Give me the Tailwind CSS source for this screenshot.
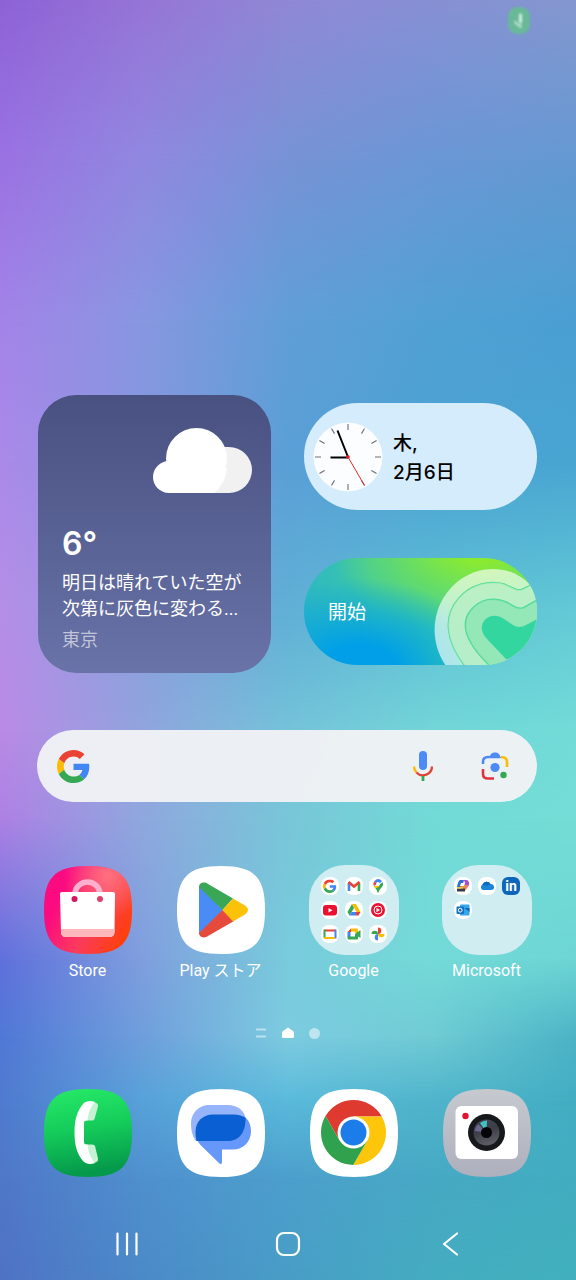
<!DOCTYPE html>
<html lang="ja">
<head>
    <meta charset="UTF-8">
    <meta name="viewport" content="width=device-width, initial-scale=1.0">
    <title>ホーム</title>
    <script src="https://cdn.jsdelivr.net/npm/@tailwindcss/browser@4"></script>
</head>
<body class="relative isolate min-h-screen bg-[#4a9dd2] font-['Roboto','Noto_Sans_CJK_JP',sans-serif] text-white">

    <!-- Wallpaper: horizontal gradients that fade into each other down the page -->
    <div class="absolute inset-0 -z-10 overflow-hidden" aria-hidden="true">
        <div class="absolute inset-0 bg-[linear-gradient(90deg,#8e62d6,#9675d6,#9088d6,#8790d4,#8497cf)]"></div>
        <div class="absolute inset-0 bg-[linear-gradient(90deg,#9a72e2,#9088e0,#7793d6,#6a97d6,#6499d2)] mask-[linear-gradient(transparent_0%,black_12.5%)]"></div>
        <div class="absolute inset-0 bg-[linear-gradient(90deg,#a383e8,#8797e0,#619ed8,#51a1d4,#4a9fd2)] mask-[linear-gradient(transparent_12.5%,black_25%)]"></div>
        <div class="absolute inset-0 bg-[linear-gradient(90deg,#ab89e9,#8498df,#5a9fd6,#4aa2d2,#48a5d2)] mask-[linear-gradient(transparent_25%,black_36%)]"></div>
        <div class="absolute inset-0 bg-[linear-gradient(90deg,#b68ee7,#889fdc,#60b0d6,#60c0d6,#64cad6)] mask-[linear-gradient(transparent_36%,black_48%)]"></div>
        <div class="absolute inset-0 bg-[linear-gradient(90deg,#ba8ae6,#90a4dd,#74c2d9,#72d5d7,#72dcd8)] mask-[linear-gradient(transparent_48%,black_57%)]"></div>
        <div class="absolute inset-0 bg-[linear-gradient(90deg,#ad80e4,#8fa8de,#78c6d8,#72dad6,#74ddd6)] mask-[linear-gradient(transparent_57%,black_64%)]"></div>
        <div class="absolute inset-0 bg-[linear-gradient(90deg,#5f70dc,#7f9fde,#78cbdc,#74dad8,#6cd6d4)] mask-[linear-gradient(transparent_64%,black_75%)]"></div>
        <div class="absolute inset-0 bg-[linear-gradient(90deg,#5078d6,#6f9fdc,#7dcbe0,#6fcbd4,#4bb3c6)] mask-[linear-gradient(transparent_75%,black_81%)]"></div>
        <div class="absolute inset-0 bg-[linear-gradient(90deg,#4f7acf,#57a2d9,#5abadb,#50b4cb,#43adc2)] mask-[linear-gradient(transparent_81%,black_86%)]"></div>
        <div class="absolute inset-0 bg-[linear-gradient(90deg,#5077c8,#4f90ce,#4c9fcc,#47a9c4,#41adc0)] mask-[linear-gradient(transparent_86%,black_92%)]"></div>
        <div class="absolute inset-0 bg-[linear-gradient(90deg,#4f72c4,#4b8ac8,#489dc6,#44acc0,#41b0bc)] mask-[linear-gradient(transparent_92%,black_100%)]"></div>
    </div>

    <!-- Shared shapes -->
    <svg class="hidden" aria-hidden="true">
        <defs>
            <symbol id="squircle" viewBox="0 0 88 88">
                <path d="M44 0C77 0 88 11 88 44S77 88 44 88 0 77 0 44 11 0 44 0Z"/>
            </symbol>
            <symbol id="google-g" viewBox="0 0 48 48">
                <path fill="#ea4335" d="M24 9.500c3.540 0 6.710 1.220 9.210 3.600l6.850-6.850C35.900 2.380 30.470 0 24 0 14.620 0 6.510 5.380 2.560 13.220l7.980 6.190C12.430 13.720 17.740 9.500 24 9.500z"/>
                <path fill="#4285f4" d="M46.980 24.550c0-1.570-.15-3.090-.38-4.550H24v9.020h12.940c-.58 2.960-2.260 5.480-4.780 7.180l7.730 6c4.510-4.180 7.090-10.360 7.090-17.650z"/>
                <path fill="#fbbc05" d="M10.530 28.590c-.48-1.450-.76-2.990-.76-4.590s.27-3.140.76-4.590l-7.980-6.190C.92 16.460 0 20.120 0 24c0 3.880.92 7.540 2.560 10.780l7.970-6.190z"/>
                <path fill="#34a853" d="M24 48c6.480 0 11.930-2.130 15.890-5.810l-7.730-6c-2.150 1.450-4.920 2.300-8.160 2.300-6.260 0-11.570-4.220-13.470-9.910l-7.980 6.190C6.510 42.620 14.620 48 24 48z"/>
            </symbol>
        </defs>
    </svg>

    <div class="flex min-h-screen flex-col">
        <!-- Status bar -->
        <header class="flex justify-end pt-[7px] pr-[46px]">
            <div class="flex h-[27px] w-[22px] items-center justify-center rounded-[9px] bg-[#66bd92]/90 blur-[1px]" role="img" aria-label="マイク使用中">
                <svg class="h-[18px] w-3" viewBox="0 0 12 18" fill="none" stroke="#d5efe2">
                    <path d="M7.500 3v7" stroke-width="3" stroke-linecap="round"/>
                    <path d="M2 9c1 4 4 4.500 6 4.500M7.500 13v3" stroke-width="1.600"/>
                </svg>
            </div>
        </header>

        <main class="mt-[361px] flex flex-col pr-[2px]">
            <!-- Widgets -->
            <section class="grid grid-cols-2 items-center gap-[33px] pr-[37px] pl-[38px]">
                <a href="#weather" class="flex h-[278px] flex-col rounded-[38px] bg-linear-to-b from-[#485180] to-[#6a73a8] px-6 pt-[33px]">
                    <svg class="mr-[-5px] h-[65px] w-[99px] self-end" viewBox="0 0 99 65" aria-hidden="true">
                        <path fill="#f1f1f2" d="M60 21C65 19 70 19 76 19a23 23 0 0 1 0 46H50Z"/>
                        <circle cx="16" cy="49" r="16" fill="#fff"/>
                        <circle cx="43.500" cy="30.500" r="30.500" fill="#fff"/>
                        <path fill="#fff" d="M16 65V40H74C73 50 68 60 61 65Z"/>
                    </svg>
                    <p class="mt-[31px] font-['Inter'] text-[32px] leading-10 font-semibold">6°</p>
                    <p class="mt-[6px] text-[18px] leading-[26px] whitespace-nowrap">明日は晴れていた空が<br>次第に灰色に変わる...</p>
                    <p class="mt-[5px] text-[18px] leading-[26px] text-white/60">東京</p>
                </a>

                <div class="flex flex-col gap-12">
                    <a href="#clock" class="flex h-[107px] items-center gap-[10px] rounded-full bg-[#d4ecfb] pl-[9px] text-black">
                        <svg class="size-[70px] shrink-0" viewBox="-35 -35 70 70" fill="none" aria-hidden="true">
                            <circle r="34.500" fill="#fcfdff"/>
                            <g stroke="#6c7076" stroke-width="1.100">
                                <path id="ticks" d="M0-33v6M0 33v-6M-33 0h6M33 0h-6"/>
                                <use href="#ticks" transform="rotate(30)"/>
                                <use href="#ticks" transform="rotate(60)"/>
                            </g>
                            <path d="M-17.500.500H0M-10.500-26.500 0 0" stroke="#000" stroke-width="2"/>
                            <path d="M0 0 16.500 28.500" stroke="#e02828" stroke-width="1"/>
                            <circle r="1.800" fill="#f01820"/>
                        </svg>
                        <p class="pt-[2px] font-['Inter','Noto_Sans_CJK_JP',sans-serif] text-[19px] leading-[29px] font-medium">木,<br>2月6日</p>
                    </a>

                    <button type="button" class="relative h-[107px] overflow-hidden rounded-full bg-[radial-gradient(ellipse_130px_95px_at_24%_108%,#009fe8_30%,transparent),radial-gradient(ellipse_150px_85px_at_76%_-8%,#8aea32_15%,transparent),linear-gradient(90deg,#2fb8c0,#3cc8a8_30%,#35d4a8)] px-6 pt-1 text-left">
                        <svg class="absolute inset-y-0 right-0 h-[107px] w-[104px]" viewBox="130 0 104 107" aria-hidden="true">
                            <path fill="#fff" fill-opacity=".64" d="M143 108C125 82 128 46 154 24 176 6 209 6 228 28L236 40V108Z"/>
                            <path fill="#74e08b" fill-opacity=".7" stroke="#4bdc88" stroke-width="1.500" d="M162 108C142 82 140 58 156 40 168 26 187 22 201 26L212 31Q216 33 220 31L236 23V108Z"/>
                            <path fill="#fff" fill-opacity=".4" d="M162 108C142 82 140 58 156 40 168 26 187 22 201 26L212 31Q216 33 220 31L236 23V108Z"/>
                            <path fill="#66dc98" fill-opacity=".75" stroke="#45d994" stroke-width="1.500" d="M187 108C160 82 158 64 168 52 178 40 192 39 203 44L212 49Q216 51 220 50L238 40V108Z"/>
                            <path fill="#fff" fill-opacity=".2" d="M187 108C160 82 158 64 168 52 178 40 192 39 203 44L212 49Q216 51 220 50L238 40V108Z"/>
                            <path fill="#34d6a0" d="M203 101 184 81C177 74 177 65 184 60 190 56 197 58 201 61L210 67Q216 71 223 67L240 58V101Z"/>
                        </svg>
                        <span class="relative text-[19px]">開始</span>
                    </button>
                </div>
            </section>

            <!-- Google search -->
            <form class="mx-[37px] mt-[57px] flex h-[72px] items-center rounded-full bg-[#f0f2f5]/97 pr-7 pl-5" role="search">
                <svg class="size-[33px] shrink-0" aria-hidden="true"><use href="#google-g"/></svg>
                <input type="search" aria-label="Google 検索" class="mx-4 h-12 min-w-0 flex-1 bg-transparent text-lg text-black outline-none">
                <button type="button" aria-label="音声検索">
                    <svg class="h-[30px] w-5" viewBox="0 0 20 30" fill="none" aria-hidden="true">
                        <rect x="6" width="8" height="19" rx="4" fill="#4c8bf5"/>
                        <path d="M1 15.500a9 9 0 0 0 2.500 6" stroke="#fbbc05" stroke-width="2.400"/>
                        <path d="M3.500 21.500A9 9 0 0 0 19 15.500" stroke="#e04338" stroke-width="2.400"/>
                        <path d="M10 25v5" stroke="#3aa757" stroke-width="2.800"/>
                    </svg>
                </button>
                <button type="button" aria-label="Google レンズ" class="ml-12">
                    <svg class="size-7" viewBox="0 0 28 28" fill="none" stroke-width="2.600" aria-hidden="true">
                        <path d="M2 12V10Q2 5 7 5H19" stroke="#4c8bf5"/>
                        <path d="M8 6 10 2Q11 .500 13 .500H15Q17 .500 18 2L20 6Z" fill="#4c8bf5"/>
                        <path d="M20 5Q26 5 26 10V15" stroke="#fbbc05"/>
                        <path d="M2 17V22Q2 26.500 7 26.500H13" stroke="#e03340"/>
                        <circle cx="14" cy="15.500" r="4.600" fill="#4c8bf5"/>
                        <circle cx="22.500" cy="23" r="3.200" fill="#34a853"/>
                    </svg>
                </button>
            </form>

            <!-- Apps -->
            <nav class="mt-[63px] grid grid-cols-4 px-[21px] text-center text-[16px] leading-6" aria-label="アプリ">
                <a href="#store" class="flex flex-col items-center gap-1">
                    <span class="flex h-[90px] items-center">
                        <svg class="size-[88px]" viewBox="0 0 88 88" fill="none" aria-hidden="true">
                            <defs>
                                <linearGradient id="store-bg" x1="0" y1=".3" x2="1" y2=".8">
                                    <stop offset=".15" stop-color="#fb0a80"/><stop offset=".55" stop-color="#fb3b5c"/><stop offset="1" stop-color="#ff4000"/>
                                </linearGradient>
                                <radialGradient id="store-shine" cx=".72" cy=".1" r=".5">
                                    <stop stop-color="#ff8088" stop-opacity=".8"/><stop offset="1" stop-color="#ff8088" stop-opacity="0"/>
                                </radialGradient>
                            </defs>
                            <use href="#squircle" fill="url(#store-bg)"/>
                            <use href="#squircle" fill="url(#store-shine)"/>
                            <path d="M31 32V28a12.500 12 0 0 1 25 0V32" stroke="#ffb0cf" stroke-width="5.500"/>
                            <path d="M18 26H69Q71 26 71 28L70.500 66Q70.500 71 65 71H22Q17 71 17 66L16 28Q16 26 18 26Z" fill="#fff"/>
                            <path d="M17 63H70.500V66Q70.500 71 65 71H22Q17 71 17 66Z" fill="#ffb7bb"/>
                            <circle cx="30.500" cy="33" r="3" fill="#d3145f"/>
                            <circle cx="56" cy="33" r="3" fill="#e0406c"/>
                        </svg>
                    </span>
                    Store
                </a>
                <a href="#play" class="flex flex-col items-center gap-1">
                    <span class="flex h-[90px] items-center">
                        <svg class="size-[88px]" viewBox="0 0 88 88" aria-hidden="true">
                            <use href="#squircle" fill="#fff"/>
                            <path fill="#4a8cf6" d="M22 20 46 44 22 68Z"/>
                            <path fill="#3aa757" d="M22 21C22 17 27 15 31 18L56 32.500 45.500 44Z"/>
                            <path fill="#e64a3c" d="M22 67C22 71 27 73 31 70L57 55 45.500 44Z"/>
                            <path fill="#fcc20a" d="M56 32.500 68 39.500Q71 41.500 71 44T68 48.500L56 55.500 45.500 44Z"/>
                        </svg>
                    </span>
                    <span class="whitespace-nowrap">Play ストア</span>
                </a>
                <a href="#google" class="flex flex-col items-center gap-1">
                    <span class="grid size-[90px] grid-cols-3 content-start gap-[6px] rounded-[36px] bg-[#d0edf1] p-3">
                        <svg class="size-[18px] rounded-[8px] bg-white" viewBox="0 0 18 18" aria-hidden="true"><use href="#google-g" x="2" y="2.500" width="13.500" height="13.500"/></svg>
                        <svg class="size-[18px] rounded-[8px] bg-white" viewBox="0 0 18 18" fill="none" stroke-width="2.600" aria-hidden="true">
                            <path d="M4 14V6" stroke="#4285f4"/><path d="M14 14V6" stroke="#34a853"/><path d="M3.500 5 9 9.500 14.500 5" stroke="#ea4335"/>
                        </svg>
                        <svg class="size-[18px] rounded-[8px] bg-white" viewBox="0 0 18 18" aria-hidden="true">
                            <path fill="#34a853" d="M13.600 5A5 5 0 0 1 13 10C11.500 12 10 13 9.500 15.500H8.500C8.200 13.500 7.500 12.500 6.500 11.200Z"/>
                            <path fill="#fbbc05" d="M5 9 11 9 6.600 11.500Q5 10 5 9Z"/>
                            <path fill="#ea4335" d="M5.300 4.200 8 7 5 9Q3.600 6.500 5.300 4.200Z"/>
                            <path fill="#4285f4" d="M5.300 4.200Q9-.2 13 4L8.500 8.500Z"/>
                            <circle cx="9" cy="7" r="1.900" fill="#fff"/>
                        </svg>
                        <svg class="size-[18px] rounded-[8px] bg-white" viewBox="0 0 18 18" aria-hidden="true">
                            <rect x="2" y="4" width="14" height="10.500" rx="3" fill="#ea1230"/><path fill="#fff" d="M7.500 7v4.500L11.500 9.200Z"/>
                        </svg>
                        <svg class="size-[18px] rounded-[8px] bg-white" viewBox="0 0 18 18" aria-hidden="true">
                            <path fill="#34a853" d="M7 3 2.500 11 4.500 14.500 9 7Z"/><path fill="#fbbc05" d="M7 3H11L15.500 11H11.500Z"/>
                            <path fill="#4285f4" d="M4.500 14.500 6.500 11H11L11 14.500Z"/><path fill="#ea4335" d="M11 11H15.500L13.500 14.500H11Z"/>
                        </svg>
                        <svg class="size-[18px] rounded-[8px] bg-white" viewBox="0 0 18 18" aria-hidden="true">
                            <circle cx="9" cy="9" r="7" fill="#ea1230"/><circle cx="9" cy="9" r="4" fill="none" stroke="#fff"/><path fill="#fff" d="M7.500 6.800v4.400L11 9Z"/>
                        </svg>
                        <svg class="size-[18px] rounded-[8px] bg-white" viewBox="0 0 18 18" fill="none" stroke-width="2" aria-hidden="true">
                            <path d="M9 5.500H14.500" stroke="#ea4335"/><path d="M3.500 5.500H9" stroke="#ea4335"/><path d="M14.500 4.500V13.500" stroke="#4285f4"/>
                            <path d="M3.500 4.500V13" stroke="#34a853"/><path d="M3 13H14" stroke="#fbbc05"/>
                        </svg>
                        <svg class="size-[18px] rounded-[8px] bg-white" viewBox="0 0 18 18" aria-hidden="true">
                            <path fill="#ea4335" d="M6 3.500V7H2.500Z"/><path fill="#4285f4" d="M2.500 7H5.500V12H2.500Z"/><path fill="#fbbc05" d="M6 3.500H12Q13 3.500 13 5V8H10V6.500H6Z"/>
                            <path fill="#34a853" d="M2.500 11.500H10V9L15.500 5V13L13 11.500V13.500Q13 14.500 12 14.500H4Q2.500 14.500 2.500 13Z"/>
                        </svg>
                        <svg class="size-[18px] rounded-[8px] bg-white" viewBox="0 0 18 18" aria-hidden="true">
                            <path fill="#ea4335" d="M9 2.500A3.250 3.250 0 0 1 9 9Z"/><path fill="#4285f4" d="M9 9A3.250 3.250 0 0 0 9 15.500Z"/>
                            <path fill="#fbbc05" d="M15.500 9A3.250 3.250 0 0 1 9 9Z"/><path fill="#34a853" d="M2.500 9A3.250 3.250 0 0 1 9 9Z"/>
                        </svg>
                    </span>
                    Google
                </a>
                <a href="#microsoft" class="flex flex-col items-center gap-1">
                    <span class="grid size-[90px] grid-cols-3 content-start gap-[6px] rounded-[36px] bg-[#d0edf1] p-3">
                        <svg class="size-[18px] rounded-[8px] bg-white" viewBox="0 0 18 18" aria-hidden="true">
                            <path fill="#2b6fd4" d="M6 3H10L8 10H3Q4 4 6 3Z"/><path fill="#a64fd8" d="M9 3H13Q15.500 4 15 8L13 11H9L11 5Z"/>
                            <path fill="#f08a4b" d="M6 8H14L12 13H7Z"/><path fill="#fff" d="M7 6H11L10 9H6Z"/><path fill="#3a3b4a" d="M3 11.500H11V14.500H3Z"/><path fill="#e8c34a" d="M3 10H9V11.500H3Z"/>
                        </svg>
                        <svg class="size-[18px] rounded-[8px] bg-white" viewBox="0 0 18 18" aria-hidden="true">
                            <path fill="#1a86d9" d="M5 13A3 3 0 0 1 4.500 7.500 4.500 4.500 0 0 1 12.500 7 3 3 0 0 1 13.500 13Z"/><path fill="#0f6abf" d="M4.500 7.500A4.500 4.500 0 0 1 12.500 7L9 9Z"/>
                        </svg>
                        <svg class="size-[18px] rounded-[6px] bg-[#0f66b8]" viewBox="0 0 18 18" aria-hidden="true">
                            <text x="9" y="14" fill="#fff" font-size="14" font-weight="700" text-anchor="middle">in</text>
                        </svg>
                        <svg class="size-[18px] rounded-[8px] bg-white" viewBox="0 0 18 18" aria-hidden="true">
                            <rect x="6" y="3.500" width="9.500" height="11" rx="1" fill="#35a6e8"/><path fill="#1466b8" d="M10.500 7H15.500V11Z"/>
                            <rect x="2.500" y="5.500" width="7.500" height="7.500" rx="1" fill="#1272c4"/><circle cx="6.200" cy="9.200" r="1.900" fill="none" stroke="#fff"/>
                        </svg>
                    </span>
                    Microsoft
                </a>
            </nav>

            <!-- Page indicator -->
            <div class="mt-11 flex h-3 items-center justify-center gap-[15px]" aria-hidden="true">
                <svg class="size-3" viewBox="0 0 12 12"><path d="M1 2.500H11M1 9.500H11" stroke="#fff" stroke-opacity=".5" stroke-width="2"/></svg>
                <svg class="size-3" viewBox="0 0 12 12"><path fill="#fff" d="M6 .500 11 4Q12 5 12 6V9.500Q12 11 10.500 11H1.500Q0 11 0 9.500V6Q0 5 1 4Z"/></svg>
                <span class="size-[11px] rounded-full bg-white/50"></span>
            </div>
        </main>

        <!-- Dock -->
        <nav class="mt-[50px] grid grid-cols-4 justify-items-center pr-[23px] pl-[21px]" aria-label="ドック">
            <a href="#phone" aria-label="電話">
                <svg class="size-[88px]" viewBox="0 0 88 88" aria-hidden="true">
                    <defs><linearGradient id="phone-bg" x2=".15" y2="1"><stop stop-color="#27ea68"/><stop offset=".5" stop-color="#14cc5a"/><stop offset="1" stop-color="#05994b"/></linearGradient></defs>
                    <use href="#squircle" fill="url(#phone-bg)"/>
                    <path fill="#c4f2d3" d="M43 14Q48 12 52.500 14 54.500 15 54 17.500L50.500 30Q50 31.500 48 31.500H40ZM43 73Q48 75.500 52.500 73 54.500 72 54 69.500L51 57Q50.500 55.500 48 55.500H40Z"/>
                    <path fill="#fff" d="M51 13C47 17 44 24 43.500 31.500H42Q40 31.500 40 34V53Q40 55.500 42 55.500H43.500C44 62 47 70 51 74 47 75.500 42 75.500 39 72 33 65 30.500 56 30.500 43.500S33 22 39 15C42 11.500 47 11.500 51 13Z"/>
                </svg>
            </a>
            <a href="#messages" aria-label="メッセージ">
                <svg class="size-[88px]" viewBox="0 0 88 88" aria-hidden="true">
                    <use href="#squircle" fill="#fff"/>
                    <path fill="#96b4fc" d="M32 16H51C60 16 66 21 68 27L56 52H19C15 47 14 40 14 34 14 24 22 16 32 16Z"/>
                    <path fill="#6697fb" d="M67 27C71 30 74 35 74 42 74 53 66 60.500 56 60.500H45V73Q45 76 42.500 74.500L24 56.500C21 53 19 50 18.500 44L56 46Z"/>
                    <path fill="#0a5fd2" d="M36 25.500H57Q64 25.500 68.500 29C69 43 62 52 51 52H19.500Q18.500 48 18.500 43C18.500 32 26 25.500 36 25.500Z"/>
                </svg>
            </a>
            <a href="#chrome" aria-label="Chrome">
                <svg class="size-[88px]" viewBox="0 0 88 88" aria-hidden="true">
                    <use href="#squircle" fill="#fff"/>
                    <g transform="translate(43.500 43.500)">
                        <path fill="#df3a30" d="M0 0V-16H28.300A32.500 32.500 0 0 0-28-16.500L-13.900 8Z"/>
                        <path fill="#fdc60a" d="M0 0V-16H28.300A32.500 32.500 0 0 1-.3 32.500L13.900 8Z"/>
                        <path fill="#30a14c" d="M0 0-13.900 8-28-16.500A32.500 32.500 0 0 0-.3 32.500L13.900 8Z"/>
                        <circle r="16" fill="#fff"/><circle r="13" fill="#1c7cea"/>
                    </g>
                </svg>
            </a>
            <a href="#camera" aria-label="カメラ">
                <svg class="size-[88px]" viewBox="0 0 88 88" aria-hidden="true">
                    <defs>
                        <linearGradient id="camera-bg" x2="0" y2="1"><stop stop-color="#c6c9ce"/><stop offset="1" stop-color="#adb0bd"/></linearGradient>
                        <linearGradient id="camera-lens" x2=".3" y2="1"><stop stop-color="#4a4a5c"/><stop offset=".5" stop-color="#3c3d46"/><stop offset="1" stop-color="#5a5b62"/></linearGradient>
                    </defs>
                    <use href="#squircle" fill="url(#camera-bg)"/>
                    <rect x="12.500" y="17" width="62.500" height="53" rx="6" fill="#fff"/>
                    <circle cx="22.500" cy="27" r="3.200" fill="#e3142f"/>
                    <circle cx="43.500" cy="43.500" r="18.500" fill="#17181c"/>
                    <circle cx="43.500" cy="43.500" r="13" fill="url(#camera-lens)"/>
                    <path fill="#3cc3c4" d="M43.500 43.500 37 34Q40 31.500 44 31.500Z"/>
                    <path fill="#6e6590" d="M43.500 43.500 32 42Q32 37.500 35.500 35.500Z"/>
                    <circle cx="43.500" cy="43.500" r="5.500" fill="#050507"/>
                </svg>
            </a>
        </nav>

        <!-- System navigation -->
        <footer class="mt-[53px] flex items-center justify-center gap-[133px] pb-[22px]">
            <button type="button" aria-label="最近">
                <svg class="size-7" viewBox="0 0 28 28" fill="none" stroke="#fff" stroke-width="2.200" stroke-linecap="round"><path d="M4.500 3.500V24.500M14 3.500V24.500M23.500 3.500V24.500"/></svg>
            </button>
            <button type="button" aria-label="ホーム">
                <svg class="size-7" viewBox="0 0 28 28" fill="none" stroke="#fff" stroke-width="2.200"><rect x="3" y="3" width="22" height="22" rx="7"/></svg>
            </button>
            <button type="button" aria-label="戻る">
                <svg class="size-7" viewBox="0 0 28 28" fill="none" stroke="#fff" stroke-width="2.200" stroke-linecap="round" stroke-linejoin="round"><path d="M22 3.500 9 14 22 24.500"/></svg>
            </button>
        </footer>
    </div>
</body>
</html>
